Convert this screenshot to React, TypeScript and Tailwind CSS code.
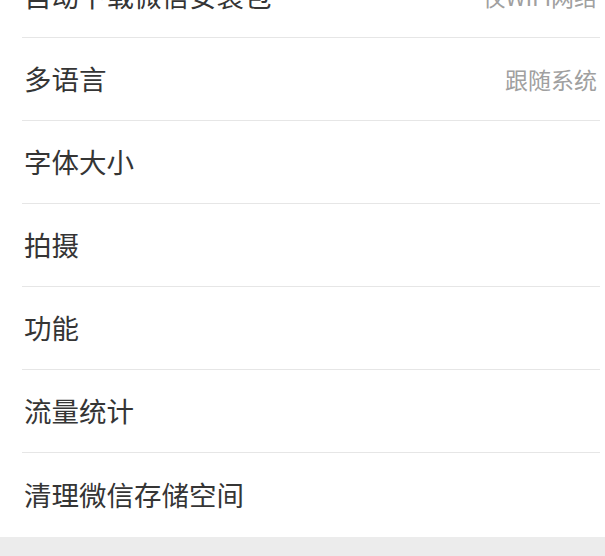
const rows: { label: string; value?: string }[] = [
  { label: '自动下载微信安装包', value: '仅WiFi网络' },
  { label: '多语言', value: '跟随系统' },
  { label: '字体大小' },
  { label: '拍摄' },
  { label: '功能' },
  { label: '流量统计' },
  { label: '清理微信存储空间' },
]

export default function App() {
  return (
    <div
      className="h-[556px] w-[605px] overflow-hidden bg-[#ececec]"
      style={{ fontFamily: '"Noto Sans CJK SC", "Noto Sans", sans-serif' }}
    >
      <div className="-mt-[45px] bg-white">
        {rows.map((row, i) => {
          const last = i === rows.length - 1
          return (
            <div
              key={row.label}
              className={
                last
                  ? 'ml-[22px] mr-[5px] flex h-[84px] items-center justify-between pl-[2px] pr-[3px]'
                  : 'ml-[22px] mr-[5px] flex h-[83px] items-center justify-between border-b border-[#e6e6e6] pl-[2px] pr-[3px]'
              }
            >
              <span className="text-[27.5px] leading-none text-[#353535]">{row.label}</span>
              {row.value && <span className="text-[23px] leading-none text-[#a0a0a0]">{row.value}</span>}
            </div>
          )
        })}
      </div>
    </div>
  )
}
